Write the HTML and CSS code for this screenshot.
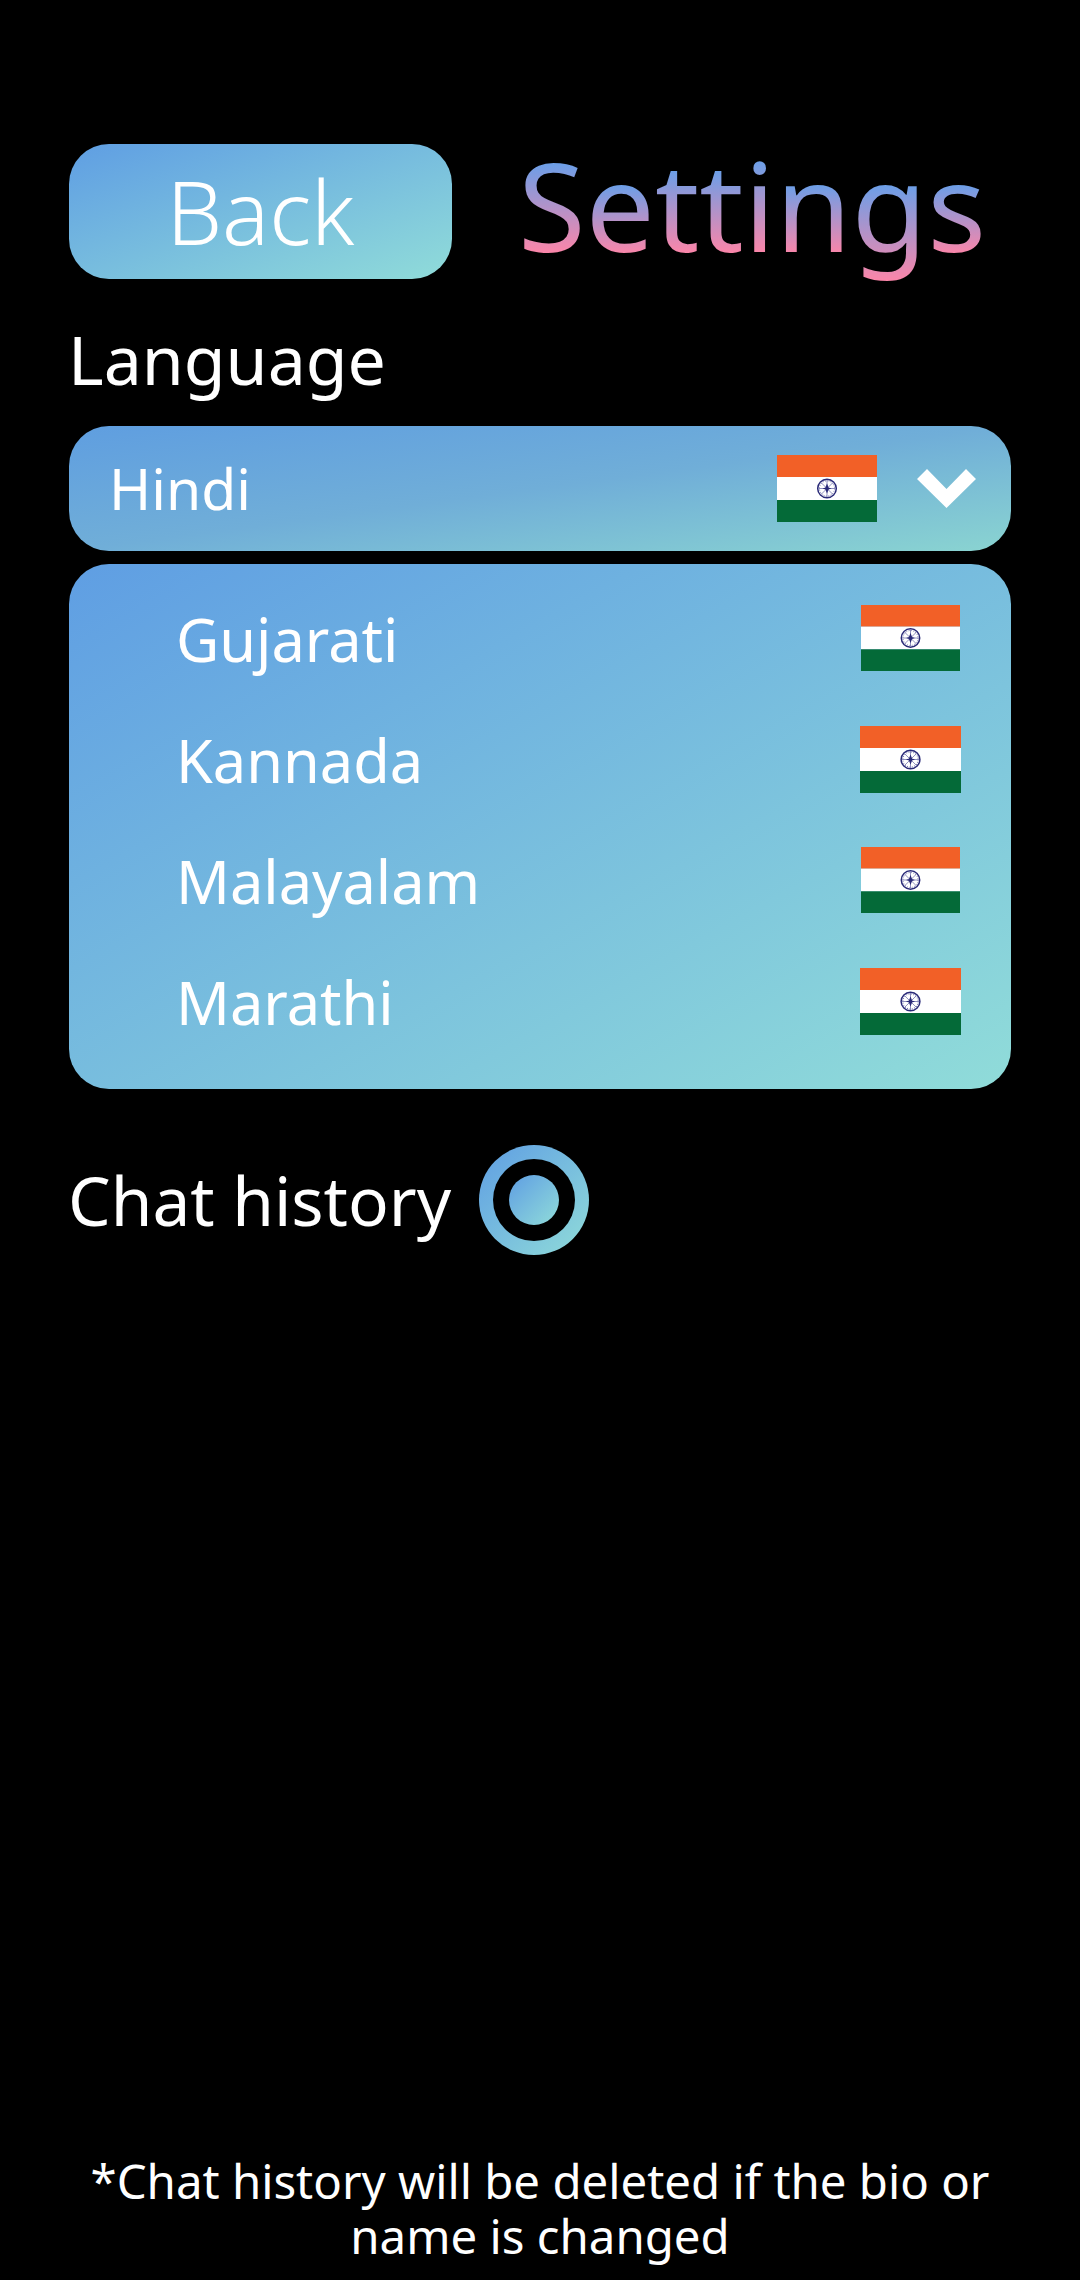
FILE: index.html
```html
<!DOCTYPE html>
<html lang="en">
<head>
    <meta charset="utf-8">
    <meta name="viewport" content="width=device-width">
    <title>Settings</title>
    <link rel="stylesheet" href="styles.css">
</head>
<body>
    <svg class="defs" width="0" height="0" aria-hidden="true">
        <symbol id="flag" viewBox="0 0 100 67" preserveAspectRatio="none">
            <rect width="100" height="22" fill="#f26027"/>
            <rect y="22" width="100" height="23" fill="#fff"/>
            <rect y="45" width="100" height="22" fill="#046a38"/>
            <circle cx="50" cy="33.500" r="9.300" fill="#fff" stroke="#2a2a78" stroke-width="1.500"/>
            <circle cx="50" cy="33.500" r="7.600" fill="none" stroke="#6f70ab" stroke-width="1" stroke-dasharray="1 1.400"/>
            <path d="M50 25v17M41.500 33.500h17M44 27.500l12 12M56 27.500l-12 12" stroke="#7374ae" stroke-width="0.800"/>
            <path d="M50 28.500l2 5-2 5-2-5zM45.500 33.500l4.500-1.500 4.500 1.500-4.500 1.500z" fill="#2a2a78"/>
        </symbol>
    </svg>

    <!-- header -->
    <header class="top">
        <button class="back grad">Back</button>
        <h1 class="title"><span class="glyphCap">S</span><span class="glyphX">e</span><span class="glyphT">t</span><span class="glyphT">t</span><span class="glyphI">i</span><span class="glyphX">n</span><span class="glyphG">g</span><span class="glyphX">s</span></h1>
    </header>

    <!-- language -->
    <h2 class="label">Language</h2>
    <div class="select">
        <span class="selectName">Hindi</span>
        <svg class="flag"><use href="#flag"/></svg>
        <svg class="chevron" viewBox="0 0 59 39"><polygon points="0,10 10,0 29.500,20 49,0 59,10 29.500,39" fill="#fff"/></svg>
    </div>

    <ul class="menu grad">
        <li class="menuItem"><span>Gujarati</span><svg class="flag"><use href="#flag"/></svg></li>
        <li class="menuItem"><span>Kannada</span><svg class="flag"><use href="#flag"/></svg></li>
        <li class="menuItem"><span>Malayalam</span><svg class="flag"><use href="#flag"/></svg></li>
        <li class="menuItem"><span>Marathi</span><svg class="flag"><use href="#flag"/></svg></li>
    </ul>

    <!-- chat history -->
    <div class="history">
        <span class="historyLabel">Chat history</span>
        <span class="radio"><span class="radioDot"></span></span>
    </div>

    <p class="note">*Chat history will be deleted if the bio or name is changed</p>
</body>
</html>
```

FILE: styles.css
```css
* {margin: 0; padding: 0; box-sizing: border-box;}
html, body {background: #000;}
body {
    width: 1080px; height: 2280px; overflow: hidden;
    padding: 144px 69px 0;
    display: flex; flex-direction: column;
    font-family: "Noto Sans", "Open Sans", sans-serif;
    color: #fff;
}
.defs {position: absolute;}

.grad {background: linear-gradient(to bottom right, #5f9ee3 0%, #90dcd9 100%);}

/* header */
.top {display: flex; align-items: center; height: 135px;}
.back {
    width: 383px; height: 135px; border: 0; border-radius: 40px;
    font: 300 88px/135px "Noto Sans", sans-serif; color: #fff;
}
.title {margin: 0 0 14px 66px; font-size: 123px; font-weight: 400; line-height: 135px;}

/* every letter of the title has its own gradient, from its top to its bottom */
.title span {-webkit-background-clip: text; background-clip: text; color: transparent;}
.glyphCap {background-image: linear-gradient(180deg, #6a9fe8 41px, #fd85a8 133px);}
.glyphT {background-image: linear-gradient(180deg, #6a9fe8 49px, #fd85a8 133px);}
.glyphI {background-image: linear-gradient(180deg, #6a9fe8 39px, #fd85a8 133px);}
.glyphX {background-image: linear-gradient(180deg, #6a9fe8 63px, #fd85a8 134px);}
.glyphG {background-image: linear-gradient(180deg, #6a9fe8 63px, #fd85a8 161px);}

/* language */
.label {margin: 38px 0 0 -1px; font-size: 68px; font-weight: 400; line-height: 84px;}
.select {
    margin-top: 25px; height: 125px; border-radius: 40px;
    background: linear-gradient(to bottom right, #5f9ee0 0%, #70aed8 50%, #8ad4d1 100%);
    display: flex; align-items: center; padding: 0 35px 0 40px;
    font-size: 57px;
}
.selectName {flex: 1; margin-top: -2px;}
.flag {display: block; width: 100px; height: 67px;}
.chevron {display: block; width: 59px; height: 39px; margin-left: 40px;}

.menu {
    margin-top: 13px; height: 525px; border-radius: 40px; list-style: none;
    padding: 14px 50px 0 107px;
    font-size: 59.500px;
}
.menuItem {display: flex; align-items: center; justify-content: space-between; height: 121px;}
.menuItem:nth-child(odd) .flag {width: 99px; height: 66px; margin: 0 1px 1px 0;}
.menuItem:nth-child(even) .flag {width: 101px;}

/* chat history */
.history {margin-top: 56px; display: flex; align-items: center; height: 110px;}
.historyLabel {margin-left: -1px; font-size: 67.500px;}
.radio {
    margin-left: 28px; width: 110px; height: 110px; border-radius: 50%;
    background: linear-gradient(to bottom right, #5f9ee3, #90dcd9);
    display: flex; align-items: center; justify-content: center;
    position: relative;
}
.radio::before {content: ""; position: absolute; inset: 14px; border-radius: 50%; background: #000;}
.radioDot {position: relative; width: 50px; height: 50px; border-radius: 50%; background: linear-gradient(to bottom right, #5f9ee3, #90dcd9);}

.note {margin-top: auto; margin-bottom: 17px; text-align: center; font-size: 47.400px; line-height: 55px;}
```
